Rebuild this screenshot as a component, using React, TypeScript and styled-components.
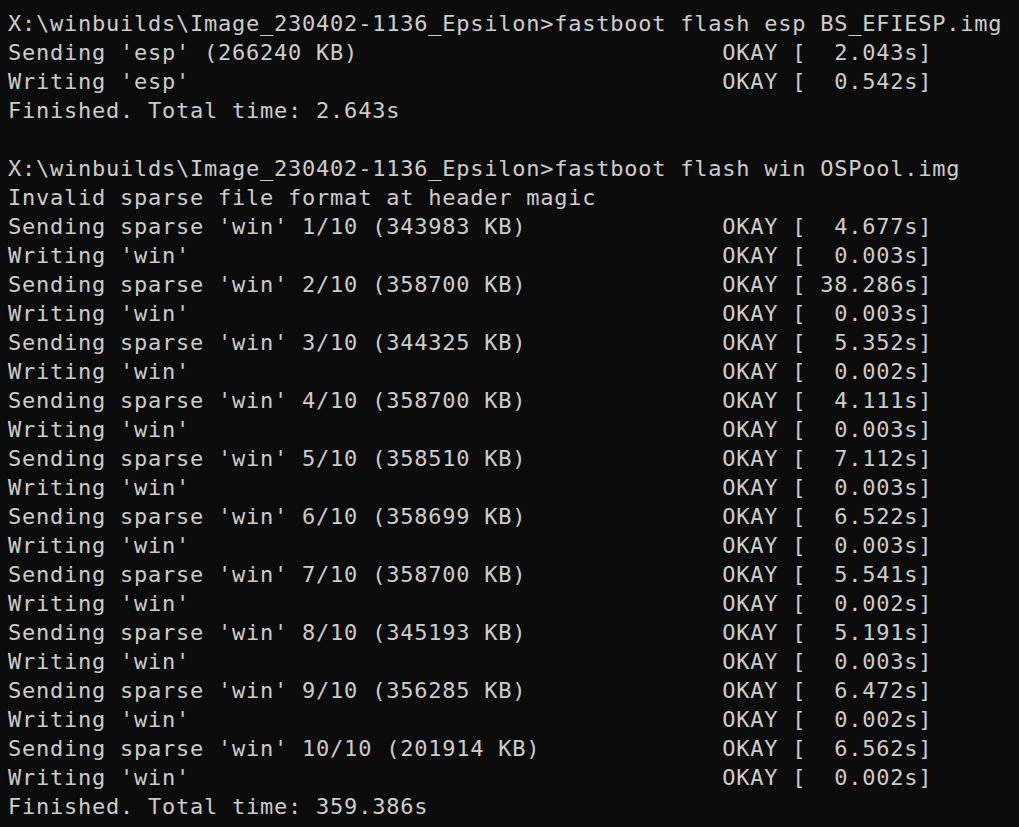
import React from "react";
import styled, { createGlobalStyle } from "styled-components";

const GlobalStyle = createGlobalStyle`
  html, body {
    margin: 0;
    padding: 0;
    background: #0c0c0c;
  }
`;

const Terminal = styled.div`
  box-sizing: border-box;
  width: 1019px;
  height: 827px;
  overflow: hidden;
  background: #0c0c0c;
  color: #cccccc;
  padding: 9px 0 0 8px;
  font-family: "DejaVu Sans Mono", "Liberation Mono", monospace;
  font-size: 22px;
  letter-spacing: 0.76px;
  line-height: 29px;
`;

const Line = styled.div`
  height: 29px;
  white-space: pre;
`;

const ok = (msg: string, t: string) =>
  msg.padEnd(50, " ") + " OKAY [" + t.padStart(7, " ") + "s]";

const prompt = "X:\\winbuilds\\Image_230402-1136_Epsilon>";

const sparse: [string, string, string, string][] = [
  ["1/10", "343983", "4.677", "0.003"],
  ["2/10", "358700", "38.286", "0.003"],
  ["3/10", "344325", "5.352", "0.002"],
  ["4/10", "358700", "4.111", "0.003"],
  ["5/10", "358510", "7.112", "0.003"],
  ["6/10", "358699", "6.522", "0.003"],
  ["7/10", "358700", "5.541", "0.002"],
  ["8/10", "345193", "5.191", "0.003"],
  ["9/10", "356285", "6.472", "0.002"],
  ["10/10", "201914", "6.562", "0.002"],
];

const lines: string[] = [
  prompt + "fastboot flash esp BS_EFIESP.img",
  ok("Sending 'esp' (266240 KB)", "2.043"),
  ok("Writing 'esp'", "0.542"),
  "Finished. Total time: 2.643s",
  "",
  prompt + "fastboot flash win OSPool.img",
  "Invalid sparse file format at header magic",
  ...sparse.flatMap(([part, kb, send, write]) => [
    ok(`Sending sparse 'win' ${part} (${kb} KB)`, send),
    ok("Writing 'win'", write),
  ]),
  "Finished. Total time: 359.386s",
];

export default function App() {
  return (
    <>
      <GlobalStyle />
      <Terminal>
        {lines.map((l, i) => (
          <Line key={i}>{l}</Line>
        ))}
      </Terminal>
    </>
  );
}
